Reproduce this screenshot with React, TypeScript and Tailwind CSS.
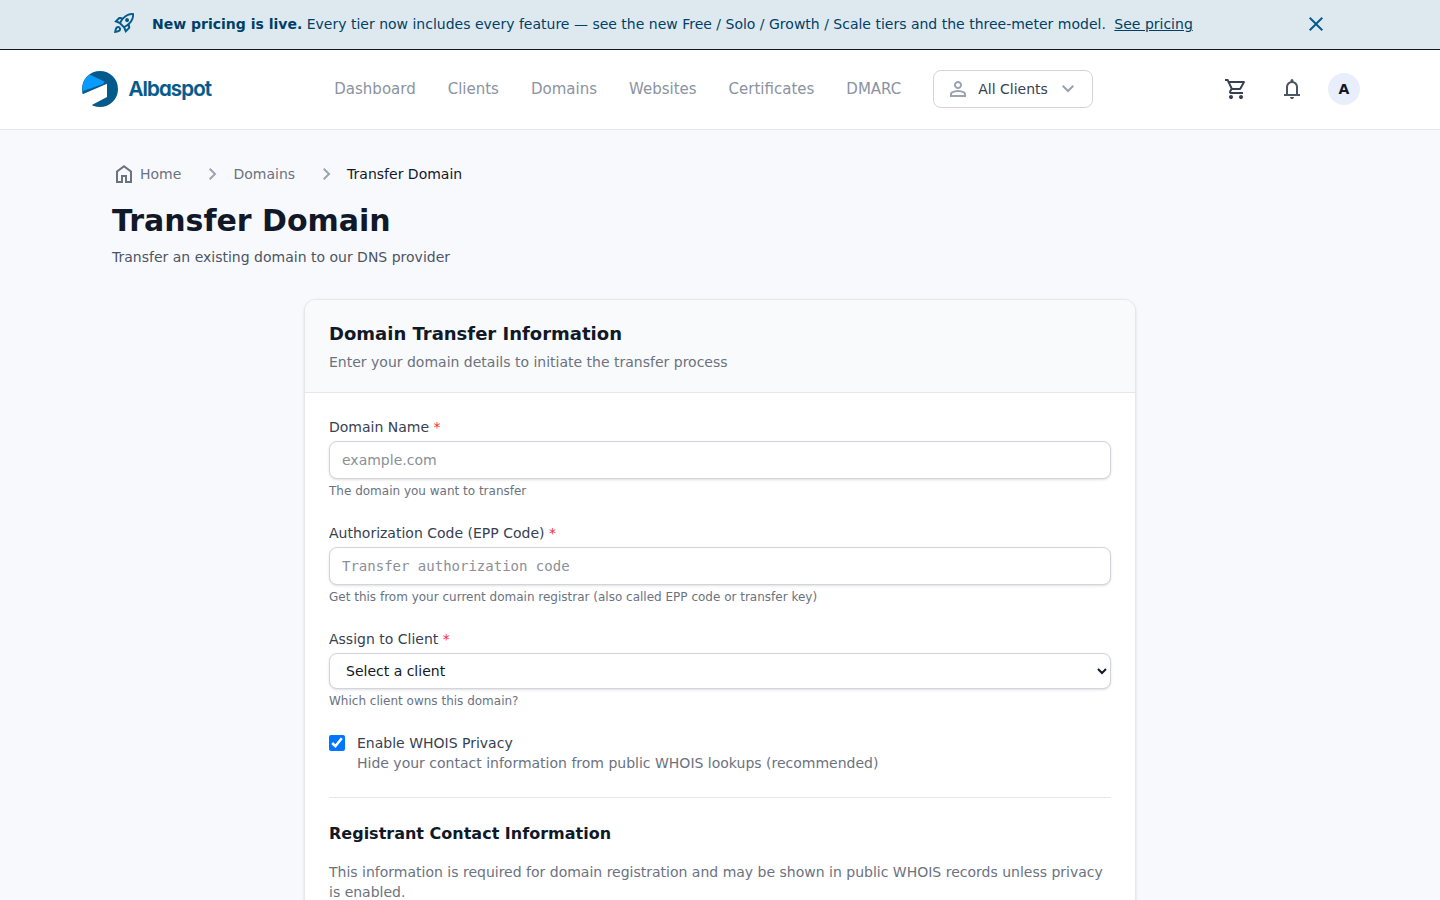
import React from "react";

const icons = {
  rocket:
    "m226-559 78 33q14-28 29-54t33-52l-56-11-84 84Zm142 83 114 113q42-16 90-49t90-75q70-70 109.5-155.5T806-800q-72-5-158 34.5T492-656q-42 42-75 90t-49 90Zm178-65q-23-23-23-56.5t23-56.5q23-23 57-23t57 23q23 23 23 56.5T660-541q-23 23-57 23t-57-23Zm19 321 84-84-11-56q-26 18-52 32.5T532-299l33 79Zm313-653q19 121-23.5 235.5T708-419l20 99q4 20-2 39t-20 33L538-80l-84-197-171-171-197-84 167-168q14-14 33.5-20t39.5-2l99 20q104-104 218-147t235-24ZM157-321q35-35 85.5-35.5T328-322q35 35 34.5 85.5T327-151q-25 25-83.5 43T82-76q14-103 32-161.5t43-83.5Zm57 56q-10 10-20 36.5T180-175q27-4 53.5-13.5T270-208q12-12 13-29t-11-29q-12-12-29-11.5T214-265Z",
  close:
    "m256-200-56-56 224-224-224-224 56-56 224 224 224-224 56 56-224 224 224 224-56 56-224-224-224 224Z",
  person:
    "M480-480q-66 0-113-47t-47-113q0-66 47-113t113-47q66 0 113 47t47 113q0 66-47 113t-113 47ZM160-160v-112q0-34 17.5-62.5T224-378q62-31 126-46.5T480-440q66 0 130 15.5T736-378q29 15 46.5 43.5T800-272v112H160Zm80-80h480v-32q0-11-5.5-20T700-306q-54-27-109-40.5T480-360q-56 0-111 13.5T260-306q-9 5-14.5 14t-5.5 20v32Zm240-320q33 0 56.5-23.5T560-640q0-33-23.5-56.5T480-720q-33 0-56.5 23.5T400-640q0 33 23.5 56.5T480-560Z",
  down: "M480-344 240-584l56-56 184 184 184-184 56 56-240 240Z",
  right: "M504-480 320-664l56-56 240 240-240 240-56-56 184-184Z",
  cart:
    "M280-80q-33 0-56.5-23.5T200-160q0-33 23.5-56.5T280-240q33 0 56.5 23.5T360-160q0 33-23.5 56.5T280-80Zm400 0q-33 0-56.5-23.5T600-160q0-33 23.5-56.5T680-240q33 0 56.5 23.5T760-160q0 33-23.5 56.5T680-80ZM246-720l96 200h280l110-200H246Zm-38-80h590q23 0 35 20.5t1 41.5L692-482q-11 20-29.5 31T622-440H324l-44 80h480v80H280q-45 0-68-39.5t-2-78.5l54-98-144-304H40v-80h130l38 80Z",
  bell:
    "M160-200v-80h80v-280q0-83 50-147.5T420-792v-28q0-25 17.5-42.5T480-880q25 0 42.5 17.5T540-820v28q80 20 130 84.5T720-560v280h80v80H160ZM480-80q-33 0-56.5-23.5T400-160h160q0 33-23.5 56.5T480-80ZM320-280h320v-280q0-66-47-113t-113-47q-66 0-113 47t-47 113v280Z",
  home:
    "M240-200h120v-240h240v240h120v-360L480-740 240-560v360Zm-80 80v-480l320-240 320 240v480H520v-240h-80v240H160Z",
};

function Icon({ name, className }: { name: keyof typeof icons; className: string }) {
  return (
    <svg viewBox="0 -960 960 960" fill="currentColor" className={`shrink-0 ${className}`} aria-hidden="true">
      <path d={icons[name]} />
    </svg>
  );
}

function Logo() {
  return (
    <div className="flex items-center gap-[11px]">
      <svg viewBox="0 0 36 36" className="size-9" aria-hidden="true">
        <circle cx="18" cy="18" r="18" fill="#055a8c" />
        <path d="M7.6 3.4L22.6 10.8L21 13L0.6 20.2A18 18 0 0 1 7.6 3.4Z" fill="#0a9bff" />
        <path d="M0 23.4L25 12.8V26L9.4 34.2L4 36L0 30Z" fill="#fff" />
      </svg>
      <svg width="86" height="28" className="-ml-px overflow-visible" aria-label="Albaspot">
        <text x="0.5" y="21" textLength="83.5" lengthAdjust="spacing" fill="#055a8c" stroke="#055a8c" strokeWidth="0.2" className="font-['Inter'] text-[20.5px] font-semibold [font-feature-settings:'cv11']">
          Albaspot
        </text>
      </svg>
    </div>
  );
}

const links = ["Dashboard", "Clients", "Domains", "Websites", "Certificates", "DMARC"];
const control = "block w-full rounded-lg border border-[#d1d5db] bg-white text-sm shadow-sm";

function Field({ label, hint, children }: { label: string; hint: string; children: React.ReactNode }) {
  return (
    <div>
      <label className="mb-1 block text-sm leading-5 text-[#374151]">
        {label} <span className="text-[#fb2c36]">*</span>
      </label>
      {children}
      <p className="mt-1 text-xs leading-4 text-[#6b7280]">{hint}</p>
    </div>
  );
}

export default function App() {
  return (
    <div className="h-[900px] overflow-hidden bg-[#f8f9fd] font-['DejaVu_Sans',sans-serif] text-[#111827]">
      <div className="flex h-[50px] items-center border-b border-[#111827] bg-[#dee9ef] pl-28 pr-28 pb-px text-sm text-[#003f66]">
        <Icon name="rocket" className="size-6 -translate-y-px text-[#055a8c]" />
        <p className="ml-4 whitespace-nowrap">
          <strong>New pricing is live.</strong> Every tier now includes every feature — see the new Free / Solo / Growth / Scale tiers and the three-meter model.
          <a href="#" className="ml-[8.5px] underline">See pricing</a>
        </p>
        <button className="ml-auto" aria-label="Dismiss">
          <Icon name="close" className="size-6 text-[#055a8c]" />
        </button>
      </div>

      <header className="flex h-20 items-center border-b border-[#e5e7eb] bg-white pl-[82px] pr-20 pb-px">
        <div className="w-[252.3px]"><Logo /></div>
        <nav className="flex items-center gap-8 text-[15px] text-[#8b93a1]">
          {links.map((l) => <a key={l} href="#">{l}</a>)}
          <button className="flex h-[38px] w-40 items-center rounded-lg border border-[#d1d5db] bg-white pl-3 text-sm text-[#374151]">
            <Icon name="person" className="size-6 text-[#9ca3af]" />
            <span className="ml-2">All Clients</span>
            <Icon name="down" className="ml-2 size-6 text-[#9ca3af]" />
          </button>
        </nav>
        <div className="ml-auto flex items-center">
          <Icon name="cart" className="size-6 text-[#374151]" />
          <Icon name="bell" className="ml-8 size-6 text-[#4b5563]" />
          <div className="ml-6 flex size-8 items-center justify-center rounded-full bg-[#e8eefb] text-sm font-bold">A</div>
        </div>
      </header>

      <main className="px-28 pt-8">
        <nav className="flex h-6 items-center text-sm text-[#6b7280]">
          <Icon name="home" className="size-6" />
          <a href="#" className="ml-1">Home</a>
          <Icon name="right" className="ml-5 size-6 text-[#9ca3af]" />
          <a href="#" className="ml-[8.15px]">Domains</a>
          <Icon name="right" className="ml-5 size-6 text-[#9ca3af]" />
          <span className="ml-2 text-[#111827]">Transfer Domain</span>
        </nav>
        <h1 className="mt-[17px] text-3xl leading-9 font-bold">Transfer Domain</h1>
        <p className="mt-2 text-sm leading-5 text-[#4b5563]">Transfer an existing domain to our DNS provider</p>

        <section className="mx-auto mt-8 w-[832px] overflow-hidden rounded-xl border border-[#e5e7eb] bg-white shadow-sm">
          <div className="h-[93px] border-b border-[#e5e7eb] bg-[#f9fafb] px-6 pt-5">
            <h2 className="text-lg leading-7 font-bold">Domain Transfer Information</h2>
            <p className="mt-1 text-sm leading-5 text-[#6b7280]">Enter your domain details to initiate the transfer process</p>
          </div>
          <form className="space-y-6 p-6">
            <Field label="Domain Name" hint="The domain you want to transfer">
              <input placeholder="example.com" className={`${control} h-[38px] px-3 placeholder:text-[#8b8f96]`} />
            </Field>
            <Field label="Authorization Code (EPP Code)" hint="Get this from your current domain registrar (also called EPP code or transfer key)">
              <input placeholder="Transfer authorization code" className={`${control} h-[38px] px-3 font-['DejaVu_Sans_Mono',monospace] placeholder:text-[#8b8f96]`} />
            </Field>
            <Field label="Assign to Client" hint="Which client owns this domain?">
              <select className={`${control} h-9 px-3 text-[#111827]`}>
                <option>Select a client</option>
              </select>
            </Field>
            <label className="flex items-start text-sm leading-5">
              <input type="checkbox" defaultChecked className="mt-0.5 size-4" />
              <span className="ml-3">
                <span className="block text-[#374151]">Enable WHOIS Privacy</span>
                <span className="block text-[#6b7280]">Hide your contact information from public WHOIS lookups (recommended)</span>
              </span>
            </label>
            <div className="border-t border-[#e5e7eb] pt-6">
              <h3 className="text-base leading-6 font-bold">Registrant Contact Information</h3>
              <p className="mt-4 text-sm leading-5 text-[#6b7280]">This information is required for domain registration and may be shown in public WHOIS records unless privacy is enabled.</p>
            </div>
          </form>
        </section>
      </main>
    </div>
  );
}
